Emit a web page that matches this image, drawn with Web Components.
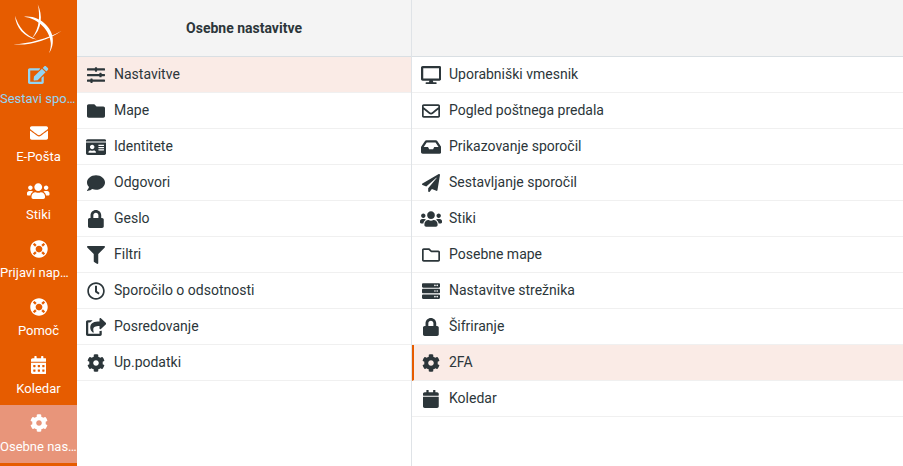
<!DOCTYPE html>
<html lang="sl">
<head>
<meta charset="utf-8">
<title>Osebne nastavitve</title>
<style>
html, body { margin: 0; height: 100%; overflow: hidden; background: #fff; }
body { font-family: Roboto, "Liberation Sans", sans-serif; }
</style>
</head>
<body>
<x-app>
	<x-sidebar slot="side">
		<x-nav-item icon="edit" class="compose" label="Sestavi sporočilo"></x-nav-item>
		<x-nav-item icon="envelope" label="E-Pošta"></x-nav-item>
		<x-nav-item icon="users" label="Stiki"></x-nav-item>
		<x-nav-item icon="life-ring" label="Prijavi napako" style="--label-pad: 2px"></x-nav-item>
		<x-nav-item icon="life-ring" label="Pomoč"></x-nav-item>
		<x-nav-item icon="calendar-alt" label="Koledar"></x-nav-item>
		<x-nav-item icon="cog" label="Osebne nastavitve" active></x-nav-item>
	</x-sidebar>
	<x-panel slot="first" title="Osebne nastavitve" style="--panel-border: 1px solid #dfe3e7">
		<x-row icon="sliders-h" selected>Nastavitve</x-row>
		<x-row icon="folder">Mape</x-row>
		<x-row icon="id-card">Identitete</x-row>
		<x-row icon="comment">Odgovori</x-row>
		<x-row icon="lock">Geslo</x-row>
		<x-row icon="filter">Filtri</x-row>
		<x-row icon="clock">Sporočilo o odsotnosti</x-row>
		<x-row icon="share-square">Posredovanje</x-row>
		<x-row icon="cog">Up.podatki</x-row>
	</x-panel>
	<x-panel slot="second">
		<x-row icon="desktop">Uporabniški vmesnik</x-row>
		<x-row icon="envelope-o">Pogled poštnega predala</x-row>
		<x-row icon="inbox">Prikazovanje sporočil</x-row>
		<x-row icon="paper-plane">Sestavljanje sporočil</x-row>
		<x-row icon="users">Stiki</x-row>
		<x-row icon="folder-o">Posebne mape</x-row>
		<x-row icon="server">Nastavitve strežnika</x-row>
		<x-row icon="lock">Šifriranje</x-row>
		<x-row icon="cog" selected marked>2FA</x-row>
		<x-row icon="calendar">Koledar</x-row>
	</x-panel>
</x-app>

<script>
// icon shapes, name -> [viewBox width, path]
const ICONS = {
	'edit': [576, 'M402.6 83.2l90.2 90.2c3.8 3.8 3.8 10 0 13.8L274.4 405.6l-92.8 10.3c-12.4 1.4-22.9-9.1-21.5-21.5l10.3-92.8L388.8 83.2c3.8-3.8 10-3.8 13.8 0zm162-22.9l-48.8-48.8c-15.2-15.2-39.9-15.2-55.2 0l-35.4 35.4c-3.8 3.8-3.8 10 0 13.8l90.2 90.2c3.8 3.8 10 3.8 13.8 0l35.4-35.4c15.2-15.3 15.2-40 0-55.2zM384 346.2V448H64V128h229.8c3.2 0 6.2-1.3 8.5-3.5l40-40c7.6-7.6 2.2-20.5-8.5-20.5H48C21.5 64 0 85.5 0 112v352c0 26.5 21.5 48 48 48h352c26.5 0 48-21.5 48-48V306.2c0-10.7-12.9-16-20.5-8.5l-40 40c-2.2 2.3-3.5 5.3-3.5 8.5z'],
	'envelope': [512, 'M502.3 190.8c3.9-3.1 9.7-.2 9.7 4.7V400c0 26.5-21.5 48-48 48H48c-26.5 0-48-21.5-48-48V195.6c0-5 5.7-7.8 9.7-4.7 22.4 17.4 52.1 39.5 154.1 113.6 21.1 15.4 56.7 47.8 92.2 47.6 35.7.3 72-32.8 92.3-47.6 102-74.1 131.6-96.3 154-113.7zM256 320c23.2.4 56.6-29.2 73.4-41.4 132.7-96.3 142.8-104.7 173.4-128.7 5.8-4.5 9.2-11.5 9.2-18.9v-19c0-26.5-21.5-48-48-48H48C21.5 64 0 85.5 0 112v19c0 7.4 3.4 14.3 9.2 18.9 30.6 23.9 40.7 32.4 173.4 128.7 16.8 12.2 50.2 41.8 73.4 41.4z'],
	'users': [640, 'M96 224c35.3 0 64-28.7 64-64s-28.7-64-64-64-64 28.7-64 64 28.7 64 64 64zm448 0c35.3 0 64-28.7 64-64s-28.7-64-64-64-64 28.7-64 64 28.7 64 64 64zm32 32h-64c-17.6 0-33.5 7.1-45.1 18.6 40.3 22.1 68.9 62 75.1 109.4h66c17.7 0 32-14.3 32-32v-32c0-35.3-28.7-64-64-64zm-256 0c61.9 0 112-50.1 112-112S381.9 32 320 32 208 82.1 208 144s50.1 112 112 112zm76.8 32h-8.3c-20.8 10-43.9 16-68.5 16s-47.6-6-68.5-16h-8.3C179.6 288 128 339.6 128 403.2V432c0 26.5 21.5 48 48 48h288c26.5 0 48-21.5 48-48v-28.8c0-63.6-51.6-115.2-115.2-115.2zm-223.7-13.4C161.5 263.1 145.6 256 128 256H64c-35.3 0-64 28.7-64 64v32c0 17.7 14.3 32 32 32h65.9c6.3-47.4 34.9-87.3 75.2-109.4z'],
	'life-ring': [512, 'M256 8C119.033 8 8 119.033 8 256s111.033 248 248 248 248-111.033 248-248S392.967 8 256 8zm173.696 119.559l-63.399 63.399c-10.987-18.559-26.67-34.252-45.255-45.255l63.399-63.399a218.396 218.396 0 0 1 45.255 45.255zM256 352c-53.019 0-96-42.981-96-96s42.981-96 96-96 96 42.981 96 96-42.981 96-96 96zM127.559 82.304l63.399 63.399c-18.559 10.987-34.252 26.67-45.255 45.255l-63.399-63.399a218.372 218.372 0 0 1 45.255-45.255zM82.304 384.441l63.399-63.399c10.987 18.559 26.67 34.252 45.255 45.255l-63.399 63.399a218.396 218.396 0 0 1-45.255-45.255zm302.137 45.255l-63.399-63.399c18.559-10.987 34.252-26.67 45.255-45.255l63.399 63.399a218.403 218.403 0 0 1-45.255 45.255z'],
	'calendar-alt': [448, 'M0 464c0 26.5 21.5 48 48 48h352c26.5 0 48-21.5 48-48V192H0v272zm320-196c0-6.6 5.4-12 12-12h40c6.6 0 12 5.4 12 12v40c0 6.6-5.4 12-12 12h-40c-6.6 0-12-5.4-12-12v-40zm0 128c0-6.6 5.4-12 12-12h40c6.6 0 12 5.4 12 12v40c0 6.6-5.4 12-12 12h-40c-6.6 0-12-5.4-12-12v-40zM192 268c0-6.6 5.4-12 12-12h40c6.6 0 12 5.4 12 12v40c0 6.6-5.4 12-12 12h-40c-6.6 0-12-5.4-12-12v-40zm0 128c0-6.6 5.4-12 12-12h40c6.6 0 12 5.4 12 12v40c0 6.6-5.4 12-12 12h-40c-6.6 0-12-5.4-12-12v-40zM64 268c0-6.6 5.4-12 12-12h40c6.6 0 12 5.4 12 12v40c0 6.6-5.4 12-12 12H76c-6.6 0-12-5.4-12-12v-40zm0 128c0-6.6 5.4-12 12-12h40c6.6 0 12 5.4 12 12v40c0 6.6-5.4 12-12 12H76c-6.6 0-12-5.4-12-12v-40zM400 64h-48V16c0-8.8-7.2-16-16-16h-32c-8.8 0-16 7.2-16 16v48H160V16c0-8.8-7.2-16-16-16h-32c-8.8 0-16 7.2-16 16v48H48C21.5 64 0 85.5 0 112v48h448v-48c0-26.5-21.5-48-48-48z'],
	'calendar': [448, 'M12 192h424c6.6 0 12 5.4 12 12v260c0 26.5-21.5 48-48 48H48c-26.5 0-48-21.5-48-48V204c0-6.6 5.4-12 12-12zm436-44v-36c0-26.5-21.5-48-48-48h-48V12c0-6.6-5.4-12-12-12h-40c-6.6 0-12 5.4-12 12v52H160V12c0-6.6-5.4-12-12-12h-40c-6.6 0-12 5.4-12 12v52H48C21.5 64 0 85.5 0 112v36c0 6.6 5.4 12 12 12h424c6.6 0 12-5.4 12-12z'],
	'cog': [512, 'M487.4 315.7l-42.6-24.6c4.3-23.2 4.3-47 0-70.2l42.6-24.6c4.9-2.8 7.1-8.6 5.5-14-11.1-35.6-30-67.8-54.7-94.6-3.8-4.1-10-5.1-14.8-2.3L380.8 110c-17.9-15.4-38.5-27.3-60.8-35.1V25.8c0-5.6-3.9-10.5-9.4-11.7-36.7-8.2-74.3-7.8-109.2 0-5.5 1.2-9.4 6.1-9.4 11.7V75c-22.2 7.9-42.8 19.8-60.8 35.1L88.7 85.5c-4.9-2.8-11-1.9-14.8 2.3-24.7 26.7-43.6 58.9-54.7 94.6-1.7 5.4.6 11.2 5.5 14L67.3 221c-4.3 23.2-4.3 47 0 70.2l-42.6 24.6c-4.9 2.8-7.1 8.6-5.5 14 11.1 35.6 30 67.8 54.7 94.6 3.8 4.1 10 5.1 14.8 2.3l42.6-24.6c17.9 15.4 38.5 27.3 60.8 35.1v49.2c0 5.6 3.9 10.5 9.4 11.7 36.7 8.2 74.3 7.8 109.2 0 5.5-1.2 9.4-6.1 9.4-11.7v-49.2c22.2-7.9 42.8-19.8 60.8-35.1l42.6 24.6c4.9 2.8 11 1.9 14.8-2.3 24.7-26.7 43.6-58.9 54.7-94.6 1.5-5.5-.7-11.3-5.6-14.1zM256 336c-44.1 0-80-35.9-80-80s35.9-80 80-80 80 35.9 80 80-35.9 80-80 80z'],
	'sliders-h': [512, 'M496 384H160v-16c0-8.8-7.2-16-16-16h-32c-8.8 0-16 7.2-16 16v16H16c-8.8 0-16 7.2-16 16v32c0 8.8 7.2 16 16 16h80v16c0 8.8 7.2 16 16 16h32c8.8 0 16-7.2 16-16v-16h336c8.8 0 16-7.2 16-16v-32c0-8.8-7.2-16-16-16zm0-160h-80v-16c0-8.8-7.2-16-16-16h-32c-8.8 0-16 7.2-16 16v16H16c-8.8 0-16 7.2-16 16v32c0 8.8 7.2 16 16 16h336v16c0 8.8 7.2 16 16 16h32c8.8 0 16-7.2 16-16v-16h80c8.8 0 16-7.2 16-16v-32c0-8.8-7.2-16-16-16zm0-160H288V48c0-8.8-7.2-16-16-16h-32c-8.8 0-16 7.2-16 16v16H16C7.2 64 0 71.2 0 80v32c0 8.8 7.2 16 16 16h208v16c0 8.8 7.2 16 16 16h32c8.8 0 16-7.2 16-16v-16h208c8.8 0 16-7.2 16-16V80c0-8.8-7.2-16-16-16z'],
	'folder': [512, 'M464 128H272l-64-64H48C21.49 64 0 85.49 0 112v288c0 26.51 21.49 48 48 48h416c26.51 0 48-21.49 48-48V176c0-26.51-21.49-48-48-48z'],
	'folder-o': [512, 'M464 128H272l-54.63-54.63c-6-6-14.14-9.37-22.63-9.37H48C21.49 64 0 85.49 0 112v288c0 26.51 21.49 48 48 48h416c26.51 0 48-21.49 48-48V176c0-26.51-21.49-48-48-48zm0 272H48V112h140.12l54.63 54.63c6 6 14.14 9.37 22.63 9.37H464v224z'],
	'id-card': [576, 'M528 32H48C21.5 32 0 53.5 0 80v16h576V80c0-26.5-21.5-48-48-48zM0 432c0 26.5 21.5 48 48 48h480c26.5 0 48-21.5 48-48V128H0v304zm352-232c0-4.4 3.6-8 8-8h144c4.4 0 8 3.6 8 8v16c0 4.4-3.6 8-8 8H360c-4.4 0-8-3.6-8-8v-16zm0 64c0-4.4 3.6-8 8-8h144c4.4 0 8 3.6 8 8v16c0 4.4-3.6 8-8 8H360c-4.4 0-8-3.6-8-8v-16zm0 64c0-4.4 3.6-8 8-8h144c4.4 0 8 3.6 8 8v16c0 4.4-3.6 8-8 8H360c-4.4 0-8-3.6-8-8v-16zM176 192c35.3 0 64 28.7 64 64s-28.7 64-64 64-64-28.7-64-64 28.7-64 64-64zM67.1 396.2C75.5 370.5 99.6 352 128 352h8.2c12.3 5.1 25.7 8 39.8 8s27.6-2.9 39.8-8h8.2c28.4 0 52.5 18.5 60.9 44.2 3.2 9.9-5.2 19.8-15.6 19.8H82.7c-10.4 0-18.8-10-15.6-19.8z'],
	'comment': [512, 'M256 32C114.6 32 0 125.1 0 240c0 49.6 21.4 95 57 130.7C44.5 421.1 2.7 466 2.2 466.5c-2.2 2.3-2.8 5.7-1.5 8.7S4.8 480 8 480c66.3 0 116-31.8 140.6-51.4 32.7 12.3 69 19.4 107.4 19.4 141.4 0 256-93.1 256-208S397.4 32 256 32z'],
	'lock': [448, 'M400 224h-24v-72C376 68.2 307.8 0 224 0S72 68.2 72 152v72H48c-26.5 0-48 21.5-48 48v192c0 26.5 21.5 48 48 48h352c26.5 0 48-21.5 48-48V272c0-26.5-21.5-48-48-48zm-104 0H152v-72c0-39.7 32.3-72 72-72s72 32.3 72 72v72z'],
	'filter': [512, 'M487.976 0H24.028C2.71 0-8.047 25.866 7.058 40.971L192 225.941V432c0 7.831 3.821 15.17 10.237 19.662l80 55.98C298.02 518.69 320 507.493 320 487.98V225.941l184.947-184.97C520.021 25.896 509.338 0 487.976 0z'],
	'clock': [512, 'M256 8C119 8 8 119 8 256s111 248 248 248 248-111 248-248S393 8 256 8zm0 448c-110.5 0-200-89.5-200-200S145.5 56 256 56s200 89.5 200 200-89.5 200-200 200zm61.8-104.4l-84.9-61.7c-3.1-2.3-4.9-5.9-4.9-9.7V116c0-6.6 5.4-12 12-12h32c6.6 0 12 5.4 12 12v141.7l66.8 48.6c5.4 3.9 6.5 11.4 2.6 16.8L334.6 349c-3.9 5.3-11.4 6.5-16.8 2.6z'],
	'share-square': [576, 'M568.482 177.448L424.479 313.433C409.3 327.768 384 317.14 384 295.985v-71.963c-144.575.97-205.566 35.113-164.775 171.353 4.483 14.973-12.846 26.567-25.006 17.33C155.252 383.105 120 326.488 120 269.339c0-143.937 117.599-172.5 264-173.312V24.012c0-21.174 25.317-31.768 40.479-17.448l144.003 135.988c10.02 9.463 10.028 25.425 0 34.896zM384 379.128V448H64V128h50.916a11.99 11.99 0 0 0 8.648-3.693c14.953-15.568 32.237-27.89 51.014-37.676C186.708 80.3 181.727 64 168.08 64H48C21.49 64 0 85.49 0 112v352c0 26.51 21.49 48 48 48h352c26.51 0 48-21.49 48-48v-88.806c0-8.288-8.197-14.066-16.011-11.302a71.83 71.83 0 0 1-34.189 3.377c-7.27-1.046-13.8 4.514-13.8 11.859z'],
	'desktop': [576, 'M528 0H48C21.5 0 0 21.5 0 48v320c0 26.5 21.5 48 48 48h192l-16 48h-72c-13.3 0-24 10.7-24 24s10.7 24 24 24h272c13.3 0 24-10.7 24-24s-10.7-24-24-24h-72l-16-48h192c26.5 0 48-21.5 48-48V48c0-26.5-21.5-48-48-48zm-16 352H64V64h448v288z'],
	'envelope-o': [512, 'M464 64H48C21.49 64 0 85.49 0 112v288c0 26.51 21.49 48 48 48h416c26.51 0 48-21.49 48-48V112c0-26.51-21.49-48-48-48zm0 48v40.805c-22.422 18.259-58.168 46.651-134.587 106.49-16.841 13.247-50.201 45.072-73.413 44.701-23.208.375-56.579-31.459-73.413-44.701C106.18 199.465 70.425 171.067 48 152.805V112h416zM48 400V214.398c22.914 18.251 55.409 43.862 104.938 82.646 21.857 17.205 60.134 55.186 103.062 54.955 42.717.231 80.509-37.199 103.053-54.947 49.528-38.783 82.032-64.401 104.947-82.653V400H48z'],
	'inbox': [576, 'M567.938 243.908L462.25 85.374A48.003 48.003 0 0 0 422.311 64H153.689a48 48 0 0 0-39.938 21.374L8.062 243.908A47.994 47.994 0 0 0 0 270.533V400c0 26.51 21.49 48 48 48h480c26.51 0 48-21.49 48-48V270.533a47.994 47.994 0 0 0-8.062-26.625zM162.252 128h251.497l85.333 128H376l-32 64H232l-32-64H76.918l85.334-128z'],
	'paper-plane': [512, 'M476 3.2L12.5 270.6c-18.1 10.4-15.8 35.6 2.2 43.2L121 358.4l287.3-253.2c5.5-4.9 13.3 2.6 8.6 8.3L176 407v80.5c0 23.6 28.5 32.9 42.5 15.8L282 426l124.6 52.2c14.2 6 30.4-2.9 33-18.2l72-432C515 7.8 493.3-6.8 476 3.2z'],
	'server': [512, 'M480 160H32c-17.673 0-32-14.327-32-32V64c0-17.673 14.327-32 32-32h448c17.673 0 32 14.327 32 32v64c0 17.673-14.327 32-32 32zm-48-88c-13.255 0-24 10.745-24 24s10.745 24 24 24 24-10.745 24-24-10.745-24-24-24zm-64 0c-13.255 0-24 10.745-24 24s10.745 24 24 24 24-10.745 24-24-10.745-24-24-24zm112 248H32c-17.673 0-32-14.327-32-32v-64c0-17.673 14.327-32 32-32h448c17.673 0 32 14.327 32 32v64c0 17.673-14.327 32-32 32zm-48-88c-13.255 0-24 10.745-24 24s10.745 24 24 24 24-10.745 24-24-10.745-24-24-24zm-64 0c-13.255 0-24 10.745-24 24s10.745 24 24 24 24-10.745 24-24-10.745-24-24-24zm112 248H32c-17.673 0-32-14.327-32-32v-64c0-17.673 14.327-32 32-32h448c17.673 0 32 14.327 32 32v64c0 17.673-14.327 32-32 32zm-48-88c-13.255 0-24 10.745-24 24s10.745 24 24 24 24-10.745 24-24-10.745-24-24-24zm-64 0c-13.255 0-24 10.745-24 24s10.745 24 24 24 24-10.745 24-24-10.745-24-24-24z']
};

function iconSvg(name, height) {
	const [w, d] = ICONS[name];
	return `<svg xmlns="http://www.w3.org/2000/svg" viewBox="0 0 ${w} 512" height="${height}" width="${height * w / 512}" fill="currentColor"><path d="${d}"/></svg>`;
}

// Page frame - sidebar + two columns
class App extends HTMLElement {
	connectedCallback() {
		const shadow = this.attachShadow({ mode: 'open' });
		shadow.innerHTML = `<style>
:host {
	display: grid;
	grid-template-columns: 77px 335px 1fr;
	height: 100vh;
	overflow: hidden;
	color: #2c363a;
	font: 14px/20px Roboto, "Liberation Sans", sans-serif;
}
</style>
<slot name="side"></slot>
<slot name="first"></slot>
<slot name="second"></slot>`;
	}
}

// Orange strip with logo on top
class Sidebar extends HTMLElement {
	connectedCallback() {
		const shadow = this.attachShadow({ mode: 'open' });
		shadow.innerHTML = `<style>
:host {
	display: flex;
	flex-direction: column;
	background: #e65c00;
	overflow: hidden;
}
.logo {
	display: block;
	height: 57px;
	flex: none;
}
</style>
<svg class="logo" viewBox="0 0 77 57" width="77" height="57" fill="#fff">
	<path d="M37.700 4.300C42.800 15 42.500 29 31.700 38.700C40 28 40.200 15 37.700 4.300Z"/>
	<path d="M15 15.700C15.800 27 24 37.500 36.700 39.500C25.500 35.500 18.500 27 15 15.700Z"/>
	<path d="M24 16.700C39 14.500 55 28.500 52.700 43.300C52.300 47 51 50.500 49 53.300C50.500 49.500 51 46 50.800 43C50 30 38 18.500 24 16.700Z"/>
	<path d="M13.300 44.300C29 45.800 47 41 61.700 30.700C47 39 29 43.500 13.300 44.300Z"/>
</svg>
<slot></slot>`;
	}
}

// Sidebar button - icon over a truncated label
class NavItem extends HTMLElement {
	connectedCallback() {
		const shadow = this.attachShadow({ mode: 'open' });
		const label = this.getAttribute('label');
		shadow.innerHTML = `<style>
:host {
	display: flex;
	flex-direction: column;
	align-items: center;
	flex: none;
	box-sizing: border-box;
	height: 58px;
	padding-top: 9px;
	color: #fff;
	font-size: 13px;
	font-weight: 400;
}
:host(.compose) {
	color: #92d4f4;
}
:host([active]) {
	background: #e8957a;
}
.icon {
	display: flex;
	align-items: center;
	justify-content: center;
	height: 18px;
}
.label {
	box-sizing: border-box;
	width: 100%;
	margin-top: 6px;
	padding-right: var(--label-pad, 0);
	line-height: 17px;
	text-align: center;
	white-space: nowrap;
	overflow: hidden;
	text-overflow: ellipsis;
}
</style>
<span class="icon">${iconSvg(this.getAttribute('icon'), 18)}</span>
<span class="label">${label}</span>`;
	}
}

// Column - header bar and a list of rows
class Panel extends HTMLElement {
	connectedCallback() {
		const shadow = this.attachShadow({ mode: 'open' });
		const title = this.getAttribute('title') || '';
		this.removeAttribute('title');
		shadow.innerHTML = `<style>
:host {
	display: flex;
	flex-direction: column;
	box-sizing: border-box;
	border-right: var(--panel-border, 0);
	min-width: 0;
}
header {
	flex: none;
	box-sizing: border-box;
	height: 57px;
	display: flex;
	align-items: center;
	justify-content: center;
	background: #f4f4f4;
	border-bottom: 1px solid #d9dfe3;
	font-weight: 700;
}
</style>
<header>${title}</header>
<slot></slot>`;
	}
}

// List row - icon and text
class Row extends HTMLElement {
	connectedCallback() {
		const shadow = this.attachShadow({ mode: 'open' });
		shadow.innerHTML = `<style>
:host {
	display: flex;
	align-items: center;
	flex: none;
	box-sizing: border-box;
	height: 36px;
	padding-left: 8px;
	border-bottom: 1px solid #f0f0f0;
}
:host([selected]) {
	background: #faebe6;
}
:host([marked]) {
	border-left: 2px solid #e65c00;
	padding-left: 6px;
}
.icon {
	display: flex;
	align-items: center;
	justify-content: center;
	flex: none;
	width: 22px;
	margin-right: 7px;
}
.text {
	padding-bottom: 2px;
}
</style>
<span class="icon">${iconSvg(this.getAttribute('icon'), 18)}</span>
<span class="text"><slot></slot></span>`;
	}
}

customElements.define('x-app', App);
customElements.define('x-sidebar', Sidebar);
customElements.define('x-nav-item', NavItem);
customElements.define('x-panel', Panel);
customElements.define('x-row', Row);
</script>
</body>
</html>
